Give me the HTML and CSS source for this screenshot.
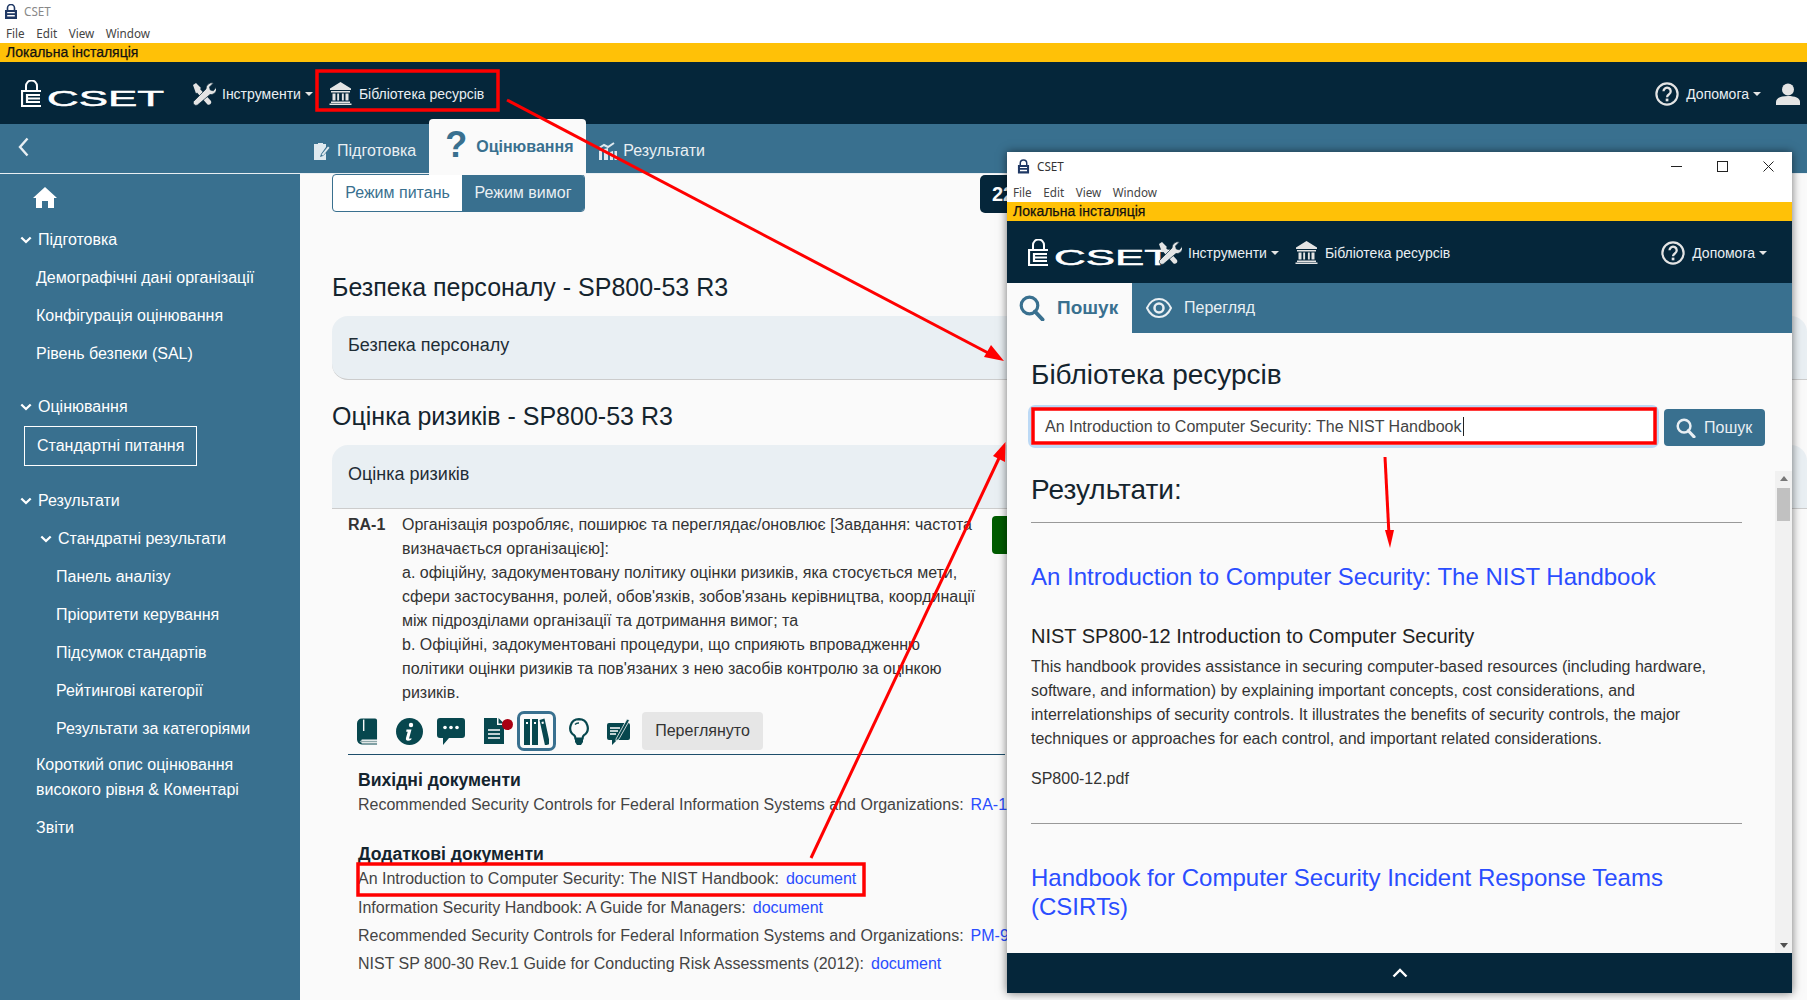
FILE: index.html
```html
<!DOCTYPE html>
<html lang="uk">
<head>
<meta charset="utf-8">
<title>CSET</title>
<link rel="stylesheet" href="styles.css">
</head>
<body>
<svg class="sprite" width="0" height="0" aria-hidden="true">
  <symbol id="i-lock" viewBox="0 0 14 15">
    <path d="M3.5 6V4a3.5 3.5 0 0 1 7 0v2" fill="none" stroke="currentColor" stroke-width="1.6"/>
    <path fill-rule="evenodd" d="M1 6h12v9H1zM3.2 8v1.2h7.6V8zM3.2 11v1.6h7.6V11z" fill="currentColor"/>
  </symbol>
  <symbol id="i-logomark" viewBox="0 0 24 27">
    <path d="M5 10V6a5.500 5.500 0 0 1 11 0v4" fill="none" stroke="currentColor" stroke-width="2"/>
    <path d="M20 11H1v15h19M19 15H6v7h13M7 18.500h12" fill="none" stroke="currentColor" stroke-width="2.200"/>
  </symbol>
  <symbol id="i-tools" viewBox="0 0 25 24">
    <path d="M2 3l3-2 5 5-1 1 11 12a2.600 2.600 0 0 1-3.500 3.500L6 10.500 5 11.500z" fill="currentColor"/>
    <path d="M2.500 19.500L15 7a6 6 0 0 1 7.500-6l-4 4 .8 3 3 .8 3.200-3.800a6 6 0 0 1-6.500 7.500L6.500 23a2.800 2.800 0 0 1-4-3.500z" fill="currentColor" stroke="#05263a" stroke-width=".7"/>
  </symbol>
  <symbol id="i-bank" viewBox="0 0 23 23">
    <path d="M11.500 0L22 6.500v1.500H1V6.500z M2 9h19v1.500H2z M3.500 11.500h3v7h-3z M8.200 11.500h1.900v7H8.200z M12.900 11.500h1.900v7h-1.900z M16.500 11.500h3v7h-3z M2 19.500h19V21H2z M0.500 21.500h22V23H.5z" fill="currentColor"/>
  </symbol>
  <symbol id="i-help" viewBox="0 0 24 24">
    <circle cx="12" cy="12" r="10.600" fill="none" stroke="currentColor" stroke-width="2.200"/>
    <path d="M8.500 9.300a3.600 3.600 0 1 1 5.600 3c-1.300.9-2 1.500-2 3" fill="none" stroke="currentColor" stroke-width="2.300"/>
    <rect x="10.700" y="16.600" width="2.700" height="2.700" fill="currentColor"/>
  </symbol>
  <symbol id="i-search" viewBox="0 0 26 26">
    <circle cx="10.500" cy="10.500" r="8.300" fill="none" stroke="currentColor" stroke-width="3.200"/>
    <path d="M16 16.500l7.500 8" fill="none" stroke="currentColor" stroke-width="4" stroke-linecap="round"/>
  </symbol>
  <symbol id="i-chev" viewBox="0 0 12 8">
    <path d="M1.300 1.500L6 6l4.700-4.500" fill="none" stroke="currentColor" stroke-width="2.300"/>
  </symbol>
</svg>

<header class="titlebar">
  <div class="title-row"><svg class="lock"><use href="#i-lock"/></svg><span class="app-title">CSET</span></div>
  <nav class="menu-row"><span>File</span><span>Edit</span><span>View</span><span>Window</span></nav>
</header>
<div class="install">Локальна інсталяція</div>
<div class="topnav">
  <svg class="logo" viewBox="0 0 144 32"><use href="#i-logomark" width="24" height="27"/><text x="26" y="26" font-size="22" textLength="117" lengthAdjust="spacingAndGlyphs" class="logo-text">CSET</text></svg>
  <svg class="nav-ic tools"><use href="#i-tools"/></svg>
  <span class="nav-link">Інструменти</span><i class="caret"></i>
  <svg class="nav-ic bank"><use href="#i-bank"/></svg>
  <span class="nav-link">Бібліотека ресурсів</span>
  <span class="spacer"></span>
  <svg class="nav-ic help"><use href="#i-help"/></svg>
  <span class="nav-link">Допомога</span><i class="caret"></i>
  <svg class="user" viewBox="0 0 24 22"><circle cx="12" cy="6.500" r="6" fill="#e4e4e4"/><path d="M0 22v-3c0-4 5-6 12-6s12 2 12 6v3z" fill="#e4e4e4"/></svg>
</div>
<div class="tabbar">
  <svg class="back" viewBox="0 0 11 20"><path d="M9.500 1.500L2 10l7.500 8.500" fill="none" stroke="#e9eff3" stroke-width="2.400"/></svg>
  <div class="tabs">
    <div class="tab">
      <svg class="tab-ic" viewBox="0 0 17 18"><path d="M1 2h4V1h5v1h3v3L8 12l-1 3 3-1 3-3v7H1z" fill="#dfe9ef"/><path d="M8.500 12.500L15 4.500l1.500 1.200-6.500 8z" fill="#dfe9ef"/></svg>
      <span>Підготовка</span>
    </div>
    <div class="tab active"><span class="qmark">?</span><span>Оцінювання</span></div>
    <div class="tab">
      <svg class="tab-ic chart" viewBox="0 0 19 18"><path d="M1 9l3-1v10H1zM6 7l4-1v12H6zM12 10l3-1v9h-3zM16.500 9H19v9h-2.500z" fill="#dfe9ef"/><path d="M1 6l5-3 4 2 6-4" fill="none" stroke="#dfe9ef" stroke-width="2"/></svg>
      <span>Результати</span>
    </div>
  </div>
</div>

<div class="body-row">
  <aside class="sidebar">
    <svg class="home" viewBox="0 0 24 21"><path d="M12 0L24 11h-3v10h-6v-7H9v7H3V11H0z" fill="#fff"/></svg>
    <div class="sb-row"><svg class="sb-chev"><use href="#i-chev"/></svg>Підготовка</div>
    <div class="sb-row sb-l1">Демографічні дані організації</div>
    <div class="sb-row sb-l1">Конфігурація оцінювання</div>
    <div class="sb-row sb-l1">Рівень безпеки (SAL)</div>
    <div class="sb-row sb-gap"><svg class="sb-chev"><use href="#i-chev"/></svg>Оцінювання</div>
    <div class="sb-current">Стандартні питання</div>
    <div class="sb-row sb-gap2"><svg class="sb-chev"><use href="#i-chev"/></svg>Результати</div>
    <div class="sb-row sb-sub"><svg class="sb-chev"><use href="#i-chev"/></svg>Стандратні результати</div>
    <div class="sb-row sb-l2">Панель аналізу</div>
    <div class="sb-row sb-l2">Пріоритети керування</div>
    <div class="sb-row sb-l2">Підсумок стандартів</div>
    <div class="sb-row sb-l2">Рейтингові категорії</div>
    <div class="sb-row sb-l2">Результати за категоріями</div>
    <div class="sb-multi">Короткий опис оцінювання високого рівня &amp; Коментарі</div>
    <div class="sb-row sb-l1">Звіти</div>
  </aside>

  <main class="content">
    <div class="mode-row">
      <div class="segmented"><span class="seg">Режим питань</span><span class="seg seg-on">Режим вимог</span></div>
      <div class="badge">22</div>
    </div>
    <h2 class="group-title first">Безпека персоналу - SP800-53 R3</h2>
    <div class="card">Безпека персоналу</div>
    <h2 class="group-title">Оцінка ризиків - SP800-53 R3</h2>
    <div class="card card-open">Оцінка ризиків</div>
    <div class="req">
      <b class="req-id">RA-1</b>
      <div class="req-text">
        <div>Організація розробляє, поширює та переглядає/оновлює [Завдання: частота визначається організацією]:</div>
        <div>a. офіційну, задокументовану політику оцінки ризиків, яка стосується мети, сфери застосування, ролей, обов'язків, зобов'язань керівництва, координації між підрозділами організації та дотримання вимог; та</div>
        <div>b. Офіційні, задокументовані процедури, що сприяють впровадженню політики оцінки ризиків та пов'язаних з нею засобів контролю за оцінкою ризиків.</div>
      </div>
      <div class="answer"></div>
    </div>
    <div class="tools-row">
      <svg class="tool t-book" viewBox="0 0 22 27"><path d="M5 0h14a2 2 0 0 1 2 2v20H5a3 3 0 0 0 0 4h16v1H5a5 5 0 0 1-5-5V5a5 5 0 0 1 5-5z" fill="#07474e"/><path d="M7 1v12" stroke="#fafafa" stroke-width="1.500"/><path d="M3 24h18" stroke="#8fa9ab" stroke-width="1.500"/></svg>
      <svg class="tool t-info" viewBox="0 0 27 27"><circle cx="13.500" cy="13.500" r="13.500" fill="#07474e"/><circle cx="15" cy="7" r="2.200" fill="#fff"/><path d="M10.500 11.500h5l-2.300 8.500c-.2.800.6 1 2.300 0l-.3 1.700c-3 1.800-6 1.200-5.200-1.700l1.700-6.200h-1.500z" fill="#fff"/></svg>
      <svg class="tool t-chat" viewBox="0 0 28 27"><path d="M3 0h22a3 3 0 0 1 3 3v14a3 3 0 0 1-3 3H12l-6 7v-7H3a3 3 0 0 1-3-3V3a3 3 0 0 1 3-3z" fill="#07474e"/><circle cx="8" cy="9.500" r="1.800" fill="#fff"/><circle cx="14" cy="9.500" r="1.800" fill="#fff"/><circle cx="20" cy="9.500" r="1.800" fill="#fff"/></svg>
      <span class="t-doc-wrap">
        <svg class="tool t-doc" viewBox="0 0 21 26"><path d="M0 0h13v7h7v19H0z" fill="#07474e"/><path d="M14.500 0L20 5.500h-5.500z" fill="#07474e"/><path d="M4 12h12M4 16h12M4 20h12" stroke="#fff" stroke-width="1.600"/></svg>
        <i class="dot"></i>
      </span>
      <span class="t-lib">
        <svg viewBox="0 0 25 27"><path d="M0 1h6v26H0zM8 1h6v26H8zM15.500 2l5-1.500L26 26l-5 1.500z" fill="#07474e"/><path d="M2 5h2M10 5h2M17.700 5l2-.5" stroke="#fff" stroke-width="2"/></svg>
      </span>
      <svg class="tool t-bulb" viewBox="0 0 20 27"><path d="M10 1.200a8.800 8.800 0 0 0-5 16c1 .8 1.400 1.600 1.400 3.300h7.200c0-1.700.4-2.500 1.400-3.300a8.800 8.800 0 0 0-5-16z" fill="#fafafa" stroke="#07474e" stroke-width="2.200"/><path d="M6 6.500A5 5 0 0 1 10 5" fill="none" stroke="#07474e" stroke-width="1.500"/><path d="M6 21h8v3l-2 3H8l-2-3z" fill="#07474e"/></svg>
      <svg class="tool t-note" viewBox="0 0 23 28"><path d="M2 6h19a2 2 0 0 1 2 2v13a2 2 0 0 1-2 2H10l-5 5v-5H2a2 2 0 0 1-2-2V8a2 2 0 0 1 2-2z" fill="#07474e"/><path d="M3 11h10M3 14h8M3 17h6" stroke="#fff" stroke-width="1.300"/><path d="M9 22L20 2l2.500 1.300L12 22l-3 2z" fill="#07474e" stroke="#fafafa" stroke-width=".8"/></svg>
      <span class="reviewed">Переглянуто</span>
    </div>
    <div class="docs">
      <h4 class="docs-title">Вихідні документи</h4>
      <div class="doc-line">Recommended Security Controls for Federal Information Systems and Organizations:<a class="doc-link">RA-1</a></div>
      <h4 class="docs-title docs-second">Додаткові документи</h4>
      <div class="doc-line doc-first">An Introduction to Computer Security: The NIST Handbook:<a class="doc-link">document</a></div>
      <div class="doc-line doc-more">Information Security Handbook: A Guide for Managers:<a class="doc-link">document</a></div>
      <div class="doc-line doc-more">Recommended Security Controls for Federal Information Systems and Organizations:<a class="doc-link">PM-9</a></div>
      <div class="doc-line doc-more">NIST SP 800-30 Rev.1 Guide for Conducting Risk Assessments (2012):<a class="doc-link">document</a></div>
    </div>
  </main>
</div>

<section class="window">
  <div class="win-title">
    <svg class="win-lock"><use href="#i-lock"/></svg><span class="win-name">CSET</span>
    <span class="spacer"></span>
    <svg class="win-ctl" viewBox="0 0 11 11"><path d="M0 5.500h11" stroke="#222"/></svg>
    <svg class="win-ctl" viewBox="0 0 11 11"><rect x=".5" y=".5" width="10" height="10" fill="none" stroke="#222"/></svg>
    <svg class="win-ctl" viewBox="0 0 11 11"><path d="M.5.500l10 10M10.500.500l-10 10" stroke="#222"/></svg>
  </div>
  <nav class="win-menu"><span>File</span><span>Edit</span><span>View</span><span>Window</span></nav>
  <div class="install win-install">Локальна інсталяція</div>
  <div class="topnav win-nav">
    <svg class="logo win-logo" viewBox="0 0 144 32"><use href="#i-logomark" width="24" height="27"/><text x="26" y="26" font-size="22" textLength="117" lengthAdjust="spacingAndGlyphs" class="logo-text">CSET</text></svg>
    <svg class="nav-ic win-tools"><use href="#i-tools"/></svg>
    <span class="nav-link">Інструменти</span><i class="caret"></i>
    <svg class="nav-ic bank"><use href="#i-bank"/></svg>
    <span class="nav-link">Бібліотека ресурсів</span>
    <span class="spacer"></span>
    <svg class="nav-ic help"><use href="#i-help"/></svg>
    <span class="nav-link">Допомога</span><i class="caret win-caret"></i>
  </div>
  <div class="win-tabs">
    <div class="win-tab on"><svg class="wt-search"><use href="#i-search"/></svg><span>Пошук</span></div>
    <div class="win-tab">
      <svg class="wt-eye" viewBox="0 0 26 20"><path d="M1 10C4 3.500 8 1 13 1s9 2.500 12 9c-3 6.500-7 9-12 9S4 16.500 1 10z" fill="none" stroke="#e9eff3" stroke-width="2"/><circle cx="13" cy="10" r="4.500" fill="none" stroke="#e9eff3" stroke-width="2.500"/></svg>
      <span>Перегляд</span>
    </div>
  </div>
  <div class="win-body">
    <h1 class="lib-title">Бібліотека ресурсів</h1>
    <div class="search-row">
      <div class="search-input"><span>An Introduction to Computer Security: The NIST Handbook</span><i class="cursor"></i></div>
      <div class="search-btn"><svg class="sb-search"><use href="#i-search"/></svg>Пошук</div>
    </div>
    <div class="results-wrap">
      <div class="results">
        <h2 class="res-title">Результати:</h2>
        <hr class="rule">
        <a class="res-link">An Introduction to Computer Security: The NIST Handbook</a>
        <div class="res-head">NIST SP800-12 Introduction to Computer Security</div>
        <p class="res-text">This handbook provides assistance in securing computer-based resources (including hardware, software, and information) by explaining important concepts, cost considerations, and interrelationships of security controls. It illustrates the benefits of security controls, the major techniques or approaches for each control, and important related considerations.</p>
        <div class="res-file">SP800-12.pdf</div>
        <hr class="rule rule2">
        <a class="res-link res-link2">Handbook for Computer Security Incident Response Teams (CSIRTs)</a>
      </div>
      <div class="scrollbar"><i class="arr up"></i><i class="thumb"></i><span class="spacer"></span><i class="arr down"></i></div>
    </div>
  </div>
  <div class="win-foot"><svg class="foot-chev" viewBox="0 0 16 10"><path d="M1.500 8.500L8 2l6.500 6.500" fill="none" stroke="#fff" stroke-width="2.400"/></svg></div>
</section>

<svg class="marks" viewBox="0 0 1807 1000" aria-hidden="true">
  <rect x="317" y="71" width="181" height="39" class="mark-box"/>
  <rect x="358" y="864" width="506" height="31" class="mark-box"/>
  <rect x="1033" y="409" width="622" height="34" class="mark-box"/>
  <path d="M507 100L992 355" class="mark-line"/>
  <path d="M1004 361L984 357L991 345z" class="mark-head"/>
  <path d="M811 858L1000 456" class="mark-line thin"/>
  <path d="M1005.500 442L1005 462L993 456z" class="mark-head"/>
  <path d="M1385 457L1389 535" class="mark-line thin"/>
  <path d="M1390 548L1385 530L1394 530z" class="mark-head"/>
</svg>
</body>
</html>
```
FILE: styles.css
```css
* { box-sizing: border-box; }
html, body { margin: 0; padding: 0; }
body {
  width: 1807px;
  height: 1000px;
  overflow: hidden;
  position: relative;
  background: #fafafa;
  color: #333;
  font-family: "Liberation Sans", Arial, sans-serif;
  font-size: 16px;
}
.sprite { position: absolute; }
.spacer { flex: 1; }
.logo-text { font-family: "Liberation Sans", sans-serif; font-weight: 400; fill: currentColor; stroke: currentColor; stroke-width: .5px; }

/* Desktop app chrome */
.titlebar { height: 43px; background: #fff; font-family: "Noto Sans", sans-serif; font-size: 11.700px; }
.title-row { height: 22px; margin-bottom: 2px; display: flex; align-items: center; padding-left: 4px; }
.lock { width: 14px; height: 15px; color: #1f3864; }
.app-title { margin-left: 6px; color: #888; }
.menu-row { display: flex; gap: 11.500px; padding-left: 6px; height: 19px; line-height: 19px; color: #444; }
.install { height: 19px; line-height: 19px; background: #ffc107; color: #111; font-size: 14px; padding-left: 6px; -webkit-text-stroke: .25px #111; }

.topnav { height: 62px; background: #05263a; color: #e9eff3; display: flex; align-items: center; padding: 1px 0 0 21px; font-size: 14px; }
.logo { width: 144px; height: 32px; margin-top: 4px; color: #fff; flex: none; }
.nav-ic { color: #e4e4e4; flex: none; }
.tools { width: 25px; height: 24px; margin-left: 26px; }
.nav-link { margin-left: 6px; white-space: nowrap; }
.caret { width: 0; height: 0; border: 4px solid transparent; border-top-color: #e4e4e4; border-bottom: 0; margin-left: 4px; }
.bank { width: 23px; height: 23px; margin-left: 16px; }
.bank + .nav-link { margin-left: 7px; }
.help { width: 24px; height: 24px; margin-right: -1px; }
.help + .nav-link { margin-left: 8px; }
.user { width: 24px; height: 22px; margin: 0 7px 0 15px; flex: none; }

.tabbar { height: 50px; background: #39708f; border-bottom: 1px solid #e9eff3; display: flex; position: relative; }
.back { width: 11px; height: 20px; margin: 13px 0 0 18px; flex: none; }
.tabs { display: flex; margin-left: 284px; align-items: flex-end; height: 50px; }
.tab { display: flex; align-items: center; color: #e9eff3; height: 49px; padding-top: 3px; white-space: nowrap; }
.tab-ic { width: 17px; height: 18px; margin-right: 7px; }
.tab.active {
  width: 157px; height: 56px; margin: 0 12px 0 13px; padding: 0 0 0 16px;
  background: #fafafa; color: #39708f; font-weight: 700; border-radius: 4px 4px 0 0;
  position: relative; margin-bottom: -1px; align-items: center;
}
.qmark { font-size: 36px; line-height: 36px; width: 31px; margin-top: -5px; }
.chart { width: 19px; margin-right: 6px; }

/* Sidebar */
.body-row { display: flex; height: 826px; }
.sidebar { width: 300px; flex: none; background: #39708f; color: #fff; padding-top: 13px; }
.home { display: block; width: 24px; height: 21px; margin: 0 0 13px 33px; }
.sb-row { height: 38px; line-height: 38px; display: flex; align-items: center; padding-left: 20px; }
.sb-chev { width: 12px; height: 8px; margin-right: 6px; color: #fff; flex: none; }
.sb-l1 { padding-left: 36px; }
.sb-l2 { padding-left: 56px; }
.sb-sub { padding-left: 40px; }
.sb-gap { margin-top: 15px; }
.sb-gap2 { margin-top: 16px; }
.sb-current { width: 173px; height: 40px; line-height: 38px; margin: 0 0 0 24px; border: 1px solid #fff; padding-left: 12px; white-space: nowrap; }
.sb-multi { padding: 4px 20px 7px 36px; line-height: 25px; }

/* Main column */
.content { flex: 1; padding-left: 32px; min-width: 0; }
.mode-row { display: flex; height: 39px; }
.segmented { display: flex; height: 38px; width: 253px; border: 1px solid #39708f; border-radius: 4px; overflow: hidden; background: #fff; }
.seg { flex: none; width: 129px; text-align: center; line-height: 35px; color: #39708f; }
.seg-on { width: 122px; background: #39708f; color: #e9eff3; }
.badge { margin: 1px 0 0 395px; width: 70px; height: 38px; background: #05263a; border-radius: 5px; color: #fff; font-weight: 700; font-size: 20px; line-height: 38px; padding-left: 12px; }
.group-title { font-weight: 400; font-size: 25px; line-height: 40px; height: 40px; margin: 16px 0 9px; color: #14242e; }
.group-title.first { margin-top: 54px; }
.card { height: 64px; background: #e9eff3; border-radius: 16px 16px 0 16px; border-bottom: 1px solid #ccc; font-size: 18px; line-height: 58px; padding-left: 16px; color: #1f2d36; }
.card-open { border-radius: 16px 16px 0 0; }

.req { display: flex; padding: 4px 0 0 16px; line-height: 24px; }
.req-id { width: 54px; flex: none; color: #333; }
.req-text { width: 578px; flex: none; }
.answer { width: 60px; height: 38px; margin: 3px 0 0 12px; background: #005c00; border-radius: 4px; flex: none; }

.tools-row { position: relative; height: 40px; margin: 6px 0 0 0; display: flex; align-items: center; padding-left: 25px; width: 673px; }
.tools-row::after { content: ""; position: absolute; left: 16px; right: 0; top: 43px; height: 1px; background: #1d4e6b; }
.tool { flex: none; display: block; }
.t-book { width: 21px; height: 27px; }
.t-info { width: 27px; height: 27px; margin-left: 18px; }
.t-chat { width: 28px; height: 27px; margin-left: 14px; }
.t-doc-wrap { position: relative; width: 29px; height: 26px; margin-left: 19px; flex: none; }
.t-doc { width: 21px; height: 26px; }
.dot { position: absolute; left: 18px; top: 1px; width: 11px; height: 11px; background: #a80012; border-radius: 50%; }
.t-lib { width: 39px; height: 40px; margin-left: 4px; border: 3px solid #39708f; border-radius: 7px; display: flex; align-items: center; justify-content: center; flex: none; }
.t-lib svg { width: 25px; height: 27px; }
.t-bulb { width: 20px; height: 27px; margin-left: 13px; }
.t-note { width: 23px; height: 28px; margin-left: 18px; }
.reviewed { margin-left: 12px; width: 121px; height: 38px; line-height: 38px; text-align: center; background: #e6e6e6; border-radius: 4px; color: #333; }

.docs { padding: 17px 0 0 26px; }
.docs-title { margin: 0; font-size: 17.600px; font-weight: 700; line-height: 25px; color: #14242e; }
.docs-second { margin-top: 25px; }
.doc-line { line-height: 24px; white-space: nowrap; color: #444; }
.doc-more { margin-top: 4px; }
.doc-first + .doc-more { margin-top: 5px; }
.doc-link { color: #2a4dff; margin-left: 7px; }

/* Floating window */
.window {
  position: absolute; left: 1007px; top: 152px; width: 785px; height: 841px;
  background: #fafafa; display: flex; flex-direction: column;
  box-shadow: 0 0 9px rgba(0, 0, 0, .55);
}
.win-title { height: 30px; padding: 0 18px 2px 10px; background: #fff; display: flex; align-items: center; font-family: "Noto Sans", sans-serif; font-size: 11.700px; color: #333; }
.win-lock { width: 13px; height: 15px; color: #1f3864; }
.win-name { margin-left: 7px; }
.win-ctl { width: 11px; height: 11px; margin-left: 35px; }
.win-menu { height: 20px; background: #fff; display: flex; gap: 11.500px; padding-left: 6px; font-family: "Noto Sans", sans-serif; font-size: 11.700px; line-height: 20px; color: #444; }
.win-install { padding-left: 6px; flex: none; }
.win-nav { flex: none; padding: 1px 25px 0 21px; }
.win-logo { margin-right: -15px; position: relative; }
.win-tools { width: 25px; height: 24px; position: relative; }
.win-nav .bank { margin-left: 16px; }

.win-tabs { height: 50px; flex: none; background: #39708f; display: flex; color: #e9eff3; }
.win-tab { display: flex; align-items: center; padding-left: 14px; }
.win-tab.on { width: 125px; padding-left: 12px; background: #fafafa; color: #39708f; font-weight: 700; font-size: 19px; }
.wt-search { width: 26px; height: 26px; margin-right: 12px; }
.wt-eye { width: 26px; height: 20px; margin-right: 12px; }

.win-body { flex: 1; min-height: 0; display: flex; flex-direction: column; }
.lib-title { font-size: 28px; font-weight: 400; line-height: 34px; margin: 25px 0 0 24px; color: #14242e; }
.search-row { display: flex; margin: 16px 0 0 24px; }
.search-input { width: 625px; height: 37px; background: #fff; border-radius: 4px; box-shadow: 0 0 0 3px #bcd9f5; display: flex; align-items: center; padding-left: 14px; color: #444; }
.cursor { width: 1px; height: 19px; background: #222; margin-left: 1px; }
.search-btn { margin: 1px 0 -1px 8px; width: 101px; height: 37px; background: #39708f; color: #e9eff3; border-radius: 4px; display: flex; align-items: center; padding-left: 12px; }
.sb-search { width: 20px; height: 20px; margin-right: 8px; }

.results-wrap { flex: 1; min-height: 0; display: flex; margin-top: 26px; overflow: hidden; }
.results { width: 768px; padding: 2px 0 0 24px; flex: none; }
.res-title { margin: 0; font-size: 28px; font-weight: 400; line-height: 34px; color: #14242e; }
.rule { width: 711px; margin: 15px 0 0; border: 0; border-top: 1px solid #999; }
.res-link { display: block; width: 711px; margin-top: 39px; font-size: 24px; line-height: 29px; color: #2a4dff; }
.res-head { margin-top: 33px; font-size: 20px; line-height: 24px; color: #222; }
.res-text { margin: 7px 0 0; width: 711px; line-height: 24px; color: #333; }
.res-file { margin-top: 16px; line-height: 24px; color: #333; }
.rule2 { margin-top: 32px; }
.res-link2 { margin-top: 39px; }
.scrollbar { width: 17px; background: #f1f1f1; display: flex; flex-direction: column; align-items: center; padding: 5px 0; }
.arr { width: 0; height: 0; border: 4px solid transparent; flex: none; }
.arr.up { border-bottom: 5px solid #777; border-top: 0; }
.arr.down { border-top: 5px solid #505050; border-bottom: 0; }
.thumb { width: 13px; height: 33px; margin-top: 7px; background: #c1c1c1; flex: none; }
.win-foot { height: 40px; flex: none; background: #05263a; display: flex; align-items: center; justify-content: center; }
.foot-chev { width: 16px; height: 10px; }

/* Red annotations */
.marks { position: absolute; left: 0; top: 0; width: 1807px; height: 1000px; pointer-events: none; }
.mark-box { fill: none; stroke: #f00; stroke-width: 3.500; }
.mark-line { fill: none; stroke: #f00; stroke-width: 3; }
.mark-head { fill: #f00; }
```
